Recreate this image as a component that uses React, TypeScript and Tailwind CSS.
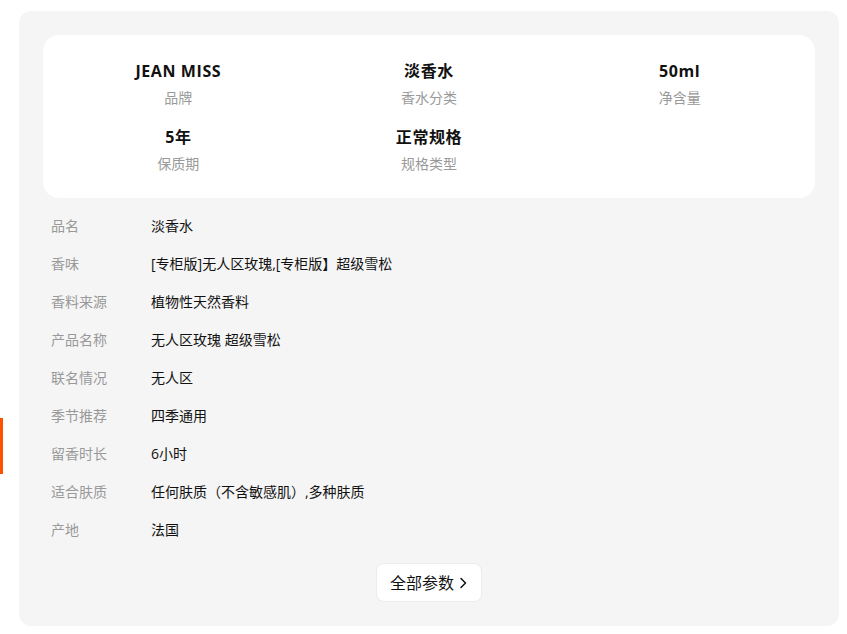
import React from "react";

const top = [
  { v: "JEAN MISS", l: "品牌" },
  { v: "淡香水", l: "香水分类" },
  { v: "50ml", l: "净含量" },
  { v: "5年", l: "保质期" },
  { v: "正常规格", l: "规格类型" },
];

const rows = [
  ["品名", "淡香水"],
  ["香味", "[专柜版]无人区玫瑰,[专柜版】超级雪松"],
  ["香料来源", "植物性天然香料"],
  ["产品名称", "无人区玫瑰 超级雪松"],
  ["联名情况", "无人区"],
  ["季节推荐", "四季通用"],
  ["留香时长", "6小时"],
  ["适合肤质", "任何肤质（不含敏感肌）,多种肤质"],
  ["产地", "法国"],
];

export default function App() {
  return (
    <div
      className="relative w-[847px] h-[634px] bg-white overflow-hidden"
      style={{ fontFamily: '"Open Sans", "Noto Sans CJK SC", sans-serif' }}
    >
      <div className="absolute left-0 top-[418px] w-[3px] h-[56px] bg-[#ff5000]" />
      <div className="ml-[19px] pt-[11px]">
        <div className="w-[820px] h-[615px] bg-[#f5f5f5] rounded-[12px] px-6 pt-6">
          <div className="bg-white rounded-[16px] px-[10px] pt-6 pb-6 grid grid-cols-3 gap-y-[17px]">
            {top.map((t) => (
              <div key={t.l} className="flex flex-col items-center gap-[5px]">
                <div className="text-[16px] leading-[24px] font-bold text-[#111] tracking-[0.6px]">{t.v}</div>
                <div className="text-[14px] leading-[20px] text-[#999]">{t.l}</div>
              </div>
            ))}
          </div>
          <div className="mt-[8px] pl-2 flex flex-col">
            {rows.map(([k, v]) => (
              <div key={k} className="h-[38px] flex items-center text-[14px]">
                <div className="w-[100px] text-[#999]">{k}</div>
                <div className="text-[#111]">{v}</div>
              </div>
            ))}
          </div>
          <div className="flex justify-center mt-[15px]">
            <button className="h-[39px] w-[106px] bg-white rounded-[8px] border border-[#ececec] flex items-center justify-center gap-[4px] text-[16px] text-[#111]">
              <span>全部参数</span>
              <svg width="10" height="14" viewBox="0 0 10 14" fill="none">
                <path d="M3 2.5 L7.5 7 L3 11.5" stroke="#111" strokeWidth="1.5" strokeLinecap="round" strokeLinejoin="round" />
              </svg>
            </button>
          </div>
        </div>
      </div>
    </div>
  );
}
